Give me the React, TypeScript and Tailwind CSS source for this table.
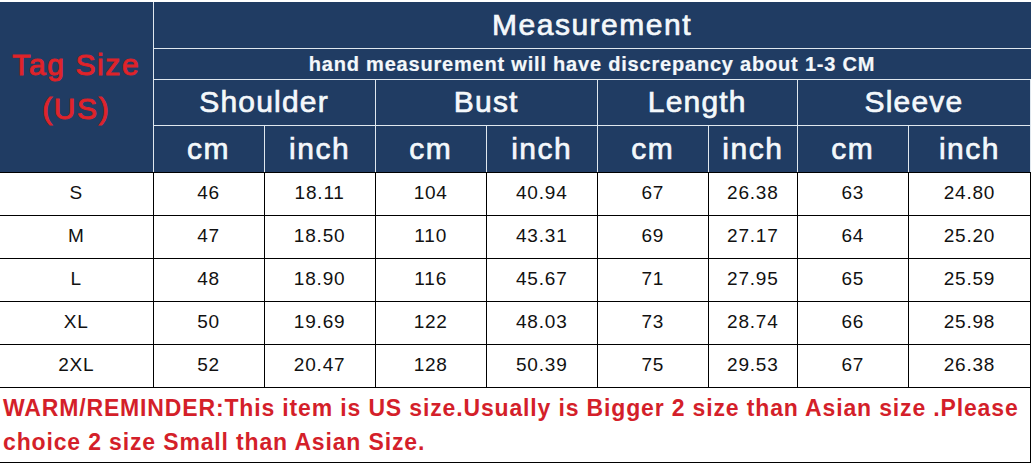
import React from 'react';

const rows = [
  ['S', '46', '18.11', '104', '40.94', '67', '26.38', '63', '24.80'],
  ['M', '47', '18.50', '110', '43.31', '69', '27.17', '64', '25.20'],
  ['L', '48', '18.90', '116', '45.67', '71', '27.95', '65', '25.59'],
  ['XL', '50', '19.69', '122', '48.03', '73', '28.74', '66', '25.98'],
  ['2XL', '52', '20.47', '128', '50.39', '75', '29.53', '67', '26.38'],
];

const widths = [153, 111, 111, 111, 111, 111, 89, 111, 122];
const groups = ['Shoulder', 'Bust', 'Length', 'Sleeve'];

const App: React.FC = () => {
  return (
    <div className="w-[1032px] h-[465px] bg-white pt-[2px] font-['Liberation_Sans',Arial,sans-serif]">
      <table className="border-collapse table-fixed w-[1031px]">
        <colgroup>
          {widths.map((w, i) => (
            <col key={i} style={{ width: w }} />
          ))}
        </colgroup>
        <thead className="bg-[#203c63] text-[#f4f8fb] [-webkit-text-stroke:0.7px_currentColor]">
          <tr className="h-[46px]">
            <th
              rowSpan={4}
              className="border-r border-r-[#dfe7ee] border-b border-b-black text-[#e3252b] text-[30px] font-normal tracking-[1.6px] leading-[44px] align-middle [-webkit-text-stroke:1px_#d8222a]"
            >
              Tag Size
              <br />
              (US)
            </th>
            <th colSpan={8} className="border-b border-[#dfe7ee] text-[30px] font-normal tracking-[1.5px] leading-none">
              Measurement
            </th>
          </tr>
          <tr className="h-[31px]">
            <th colSpan={8} className="border-b border-[#dfe7ee] text-[20px] font-bold tracking-[0.8px] leading-none [-webkit-text-stroke:0.2px_currentColor]">
              hand measurement will have discrepancy about 1-3 CM
            </th>
          </tr>
          <tr className="h-[46px]">
            {groups.map((g) => (
              <th key={g} colSpan={2} className="border border-[#dfe7ee] border-t-0 text-[30px] font-normal tracking-[1.2px] leading-none">
                {g}
              </th>
            ))}
          </tr>
          <tr className="h-[47px]">
            {groups.map((g) => (
              <React.Fragment key={g}>
                <th className="border-x border-x-[#dfe7ee] border-b border-b-black text-[30px] font-normal tracking-[1.5px] leading-none">cm</th>
                <th className="border-x border-x-[#dfe7ee] border-b border-b-black text-[30px] font-normal tracking-[1.5px] leading-none">inch</th>
              </React.Fragment>
            ))}
          </tr>
        </thead>
        <tbody className="text-[#111] text-[19px] tracking-[0.8px]">
          {rows.map((r) => (
            <tr key={r[0]} className="h-[43px]">
              {r.map((c, i) => (
                <td
                  key={i}
                  className={`border-b border-black text-center ${i === 0 ? '' : 'border-l'} ${i === 8 ? 'border-r' : ''}`}
                >
                  {c}
                </td>
              ))}
            </tr>
          ))}
          <tr className="h-[75px]">
            <td
              colSpan={9}
              className="border-b border-r border-black px-[3px] pt-[3px] align-top text-[#d41f2a] text-[23px] font-bold tracking-[0.85px] leading-[34px] whitespace-nowrap"
            >
              WARM/REMINDER:This item is US size.Usually is Bigger 2 size than Asian size .Please
              <br />
              choice 2 size Small than Asian Size.
            </td>
          </tr>
        </tbody>
      </table>
    </div>
  );
};

export default App;
